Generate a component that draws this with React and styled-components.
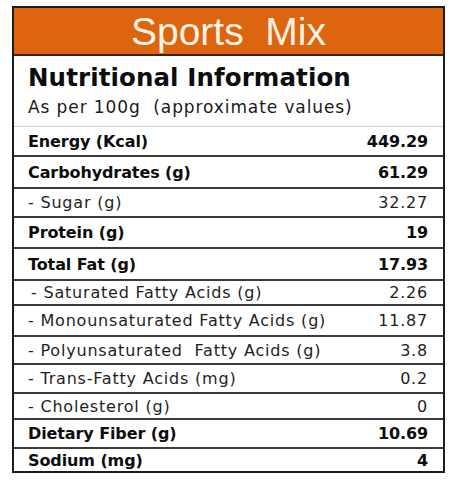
import React from "react";
import styled, { createGlobalStyle } from "styled-components";

const Global = createGlobalStyle`
  html, body { margin: 0; padding: 0; background: #ffffff; }
  body { font-family: "DejaVu Sans", sans-serif; color: #141414; }
`;

const Label = styled.div`
  box-sizing: border-box;
  width: 433px;
  margin: 6px 0 0 12px;
  border: 2px solid #1c1c1c;
  background: #ffffff;
`;

const Header = styled.div`
  height: 45px;
  background: #dd650f;
  border-bottom: 2px solid #3a2414;
  display: flex;
  align-items: center;
  justify-content: center;
  font-family: "Liberation Sans", Arial, sans-serif;
  font-size: 39px;
  color: #fff3e4;
  white-space: pre;
  line-height: 45px;
  padding-top: 1px;
  box-sizing: content-box;
`;

const Intro = styled.div`
  height: 70px;
  box-sizing: border-box;
  padding: 8px 0 0 14px;
`;

const Title = styled.div`
  font-family: "DejaVu Sans", sans-serif;
  font-weight: 700;
  font-size: 24.5px;
  line-height: 28px;
  color: #0d0d0d;
  letter-spacing: 0.1px;
`;

const Subtitle = styled.div`
  margin-top: 5px;
  font-size: 17px;
  line-height: 20px;
  letter-spacing: 0.9px;
  white-space: pre;
  color: #1a1a1a;
`;

const Row = styled.div`
  box-sizing: border-box;
  height: ${(p) => p.$h}px;
  border-top: ${(p) => (p.$first ? "1px solid #cfcfcf" : "2px solid #3a3a3a")};
  display: flex;
  align-items: center;
  justify-content: space-between;
  padding: 0 15px 0 ${(p) => p.$indent}px;
  font-size: 16px;
  font-weight: ${(p) => (p.$bold ? 700 : 400)};
  letter-spacing: ${(p) => (p.$bold ? "-0.1px" : "0.8px")};
  color: ${(p) => (p.$bold ? "#0d0d0d" : "#1e1e1e")};
  white-space: pre;
`;

const Name = styled.span``;
const Value = styled.span``;

const rows = [
  { name: "Energy (Kcal)", value: "449.29", bold: true, h: 29 },
  { name: "Carbohydrates (g)", value: "61.29", bold: true, h: 32 },
  { name: "- Sugar (g)", value: "32.27", h: 29 },
  { name: "Protein (g)", value: "19", bold: true, h: 31 },
  { name: "Total Fat (g)", value: "17.93", bold: true, h: 32 },
  { name: "- Saturated Fatty Acids (g)", value: "2.26", h: 25, indent: 17 },
  { name: "- Monounsaturated Fatty Acids (g)", value: "11.87", h: 31 },
  { name: "- Polyunsaturated  Fatty Acids (g)", value: "3.8", h: 28 },
  { name: "- Trans-Fatty Acids (mg)", value: "0.2", h: 29 },
  { name: "- Cholesterol (g)", value: "0", h: 26 },
  { name: "Dietary Fiber (g)", value: "10.69", bold: true, h: 29 },
  { name: "Sodium (mg)", value: "4", bold: true, h: 24 },
];

export default function App() {
  return (
    <>
      <Global />
      <Label>
        <Header>{"Sports  Mix"}</Header>
        <Intro>
          <Title>Nutritional Information</Title>
          <Subtitle>{"As per 100g  (approximate values)"}</Subtitle>
        </Intro>
        {rows.map((r, i) => (
          <Row
            key={r.name}
            $h={r.h}
            $bold={r.bold}
            $first={i === 0}
            $indent={r.indent || 14}
          >
            <Name>{r.name}</Name>
            <Value>{r.value}</Value>
          </Row>
        ))}
      </Label>
    </>
  );
}
